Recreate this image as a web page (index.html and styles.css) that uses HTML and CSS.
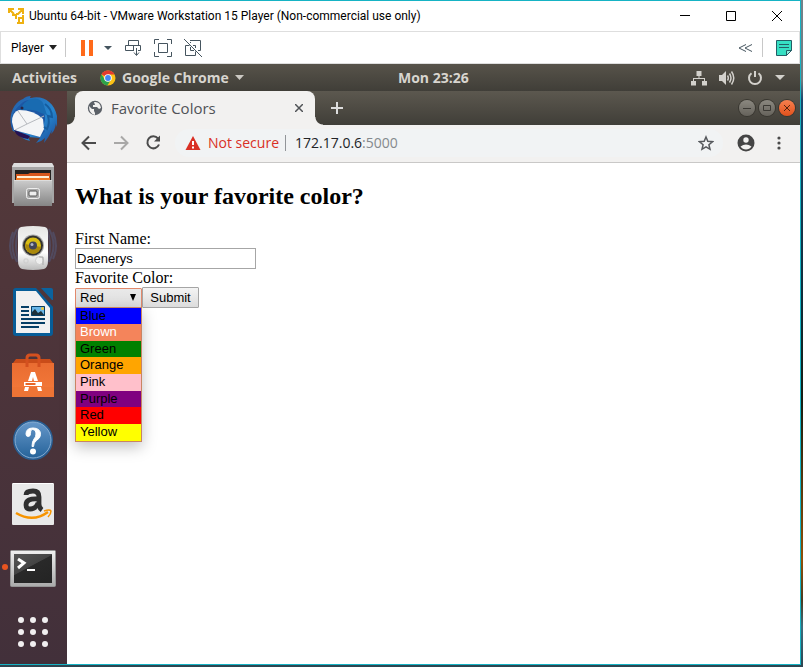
FILE: index.html
```html
<!DOCTYPE html>
<html lang="en">
<head>
<meta charset="utf-8">
<title>Favorite Colors</title>
<link rel="stylesheet" href="styles.css">
</head>
<body>
<div class="vm-window">
  <header class="titlebar">
    <svg class="vm-logo" width="16" height="16" viewBox="0 0 16 16" fill="none" stroke="#eeb111" stroke-width="2"><path d="M1 5V1h5M10 1h5v5M15 1l-5 5H8M1 1l5 5M4 7h4v4M15 15h-4v-5h4zM8 6v3M12 15H9M15 7v3"/></svg>
    <span class="vm-title">Ubuntu 64-bit - VMware Workstation 15 Player (Non-commercial use only)</span>
    <div class="caption-buttons">
      <button aria-label="Minimize"><svg width="12" height="12" viewBox="0 0 12 12" stroke="#000" fill="none"><path d="M1 5.500h10"/></svg></button>
      <button aria-label="Maximize"><svg width="12" height="12" viewBox="0 0 12 12" stroke="#000" fill="none"><path d="M1.500 1.500h9v9h-9z"/></svg></button>
      <button aria-label="Close"><svg width="12" height="12" viewBox="0 0 12 12" stroke="#000" fill="none"><path d="M1 1l10 10M11 1L1 11"/></svg></button>
    </div>
  </header>

  <div class="vm-toolbar">
    <button class="player-menu">Player <svg width="8" height="5" viewBox="0 0 8 5"><path d="M0 0h8L4 5z" fill="#222"/></svg></button>
    <span class="divider"></span>
    <button class="pause" aria-label="Suspend"><svg width="12" height="16" viewBox="0 0 12 16"><path d="M0 0h4v16H0zM8 0h4v16H8z" fill="#ff6a1a"/></svg></button>
    <button class="pause-menu" aria-label="Power options"><svg width="8" height="4" viewBox="0 0 8 4"><path d="M0 0h8L4 4z" fill="#44545f"/></svg></button>
    <div class="vm-tools">
      <button aria-label="Send Ctrl+Alt+Del"><svg width="18" height="18" viewBox="0 0 18 18" fill="none" stroke="#46555f"><path d="M4.500 6.500v-5h10v5M10 6.500H1.500v5H10M10 6.500h6.500v5H14M9.500 6.500v5M12.500 9v7M10 13.500l2.500 3 2.500-3"/></svg></button>
      <button aria-label="Full screen"><svg width="18" height="18" viewBox="0 0 18 18" fill="none" stroke="#46555f"><path d="M.5 5V.5H5M13 .5h4.500V5M17.500 13v4.500H13M5 17.500H.5V13M4.500 4.500h9v9h-9z"/></svg></button>
      <button aria-label="Unity mode"><svg width="18" height="18" viewBox="0 0 18 18" fill="none" stroke="#46555f"><path d="M0 0l18 18M6 1.500h10.500v10H14M5.500 6.500h-4v10h10v-4M6.500 3v1M6.500 8v3.500H10M9 6.500h2.500V9"/></svg></button>
    </div>
    <div class="vm-right">
      <button aria-label="Collapse toolbar"><svg width="15" height="8" viewBox="0 0 15 8" fill="none" stroke="#46555f"><path d="M8 0.500L1 4l7 3.500M14 0.500L7 4l7 3.500"/></svg></button>
      <span class="divider"></span>
      <button aria-label="Messages"><svg width="16" height="16" viewBox="0 0 16 16"><path d="M.5.500h15v10l-5 5H.5z" fill="#36dfc3" stroke="#245f66"/><path d="M10.500 15.500v-5h5z" fill="#8eeede" stroke="#245f66"/><path d="M3 4.500h10M3 7.500h10" stroke="#245f66"/></svg></button>
    </div>
  </div>

  <div class="guest">
    <div class="gnome-bar">
      <div class="gnome-left">
        <button class="activities">Activities</button>
        <button class="app-menu">
          <svg width="16" height="16" viewBox="0 0 16 16"><circle cx="8" cy="8" r="7.500" fill="#fbc116"/><path d="M8 8L1.500 4.200A7.500 7.500 0 0 1 14.600 4.500H8z" fill="#e33b2e"/><path d="M1.500 4.200A7.500 7.500 0 0 0 7.300 15.500L11 9.800 8 11.500 5 10z" fill="#2ba24c"/><circle cx="8" cy="8" r="3.800" fill="#fff"/><circle cx="8" cy="8" r="2.900" fill="#4587f3"/></svg>
          <span>Google Chrome</span>
          <svg width="9" height="5" viewBox="0 0 9 5"><path d="M0 0h9L4.500 5z" fill="#ccc9c3"/></svg>
        </button>
      </div>
      <time class="clock">Mon 23:26</time>
      <div class="tray">
        <svg width="16" height="16" viewBox="0 0 16 16" fill="#d3d1cc"><path d="M5.500 1h5v5H8.500v2H14v3h2v4.500h-5V11h2V9H3v2h2v4.500H0V11h2V8h5.500V6h-2z"/></svg>
        <svg width="16" height="16" viewBox="0 0 16 16" fill="none" stroke="#d3d1cc" stroke-width="1.500"><path d="M0 5h3l4-4v14l-4-4H0z" fill="#d3d1cc" stroke="none"/><path d="M8.500 5.500q1.600 2.500 0 5M10.500 3.500q3 4.500 0 9M12.500 1.500q4.500 6.500 0 13"/></svg>
        <svg width="16" height="16" viewBox="0 0 16 16" fill="none" stroke="#d3d1cc" stroke-width="2"><path d="M4.500 3.200a6 6 0 1 0 7 0M8 1v6"/></svg>
        <svg width="10" height="5" viewBox="0 0 10 5"><path d="M0 0h10L5 5z" fill="#d3d1cc"/></svg>
      </div>
    </div>

    <div class="desktop">
      <nav class="dock" aria-label="Dock">
        <button aria-label="Thunderbird"><svg viewBox="0 0 48 48">
          <defs><linearGradient id="tb" x2="1" y2="1"><stop stop-color="#245ca7"/><stop offset=".6" stop-color="#2786ce"/><stop offset="1" stop-color="#1b4896"/></linearGradient></defs>
          <path d="M4 35C-3 20 6 5 14 3q3-3 8-3-2 2 0 2C34-1 45 6 48 20q1 7-1 11v-4q-1 8-5 11l1-4q-3 7-8 13l1-5q-4 4-9 5l4-5L19 41l2 4q-9-2-12-8z" fill="url(#tb)"/>
          <path d="M4 35C0 26 3 15 11 9q4-5 10-5 9-2 11 8 5 7 4 12-3 9 0 11l-5 6L4 34z" fill="#1c57a4"/>
          <path d="M3 26q0-10 7-12 15 0 24 9l1 10-4 8L5 34z" fill="#f4f5f6"/>
          <path d="M9 15l9 13 17-8M18 28L6 34" fill="none" stroke="#b6b9be"/>
          <path d="M22 3q8-2 12 4l4 12q-7-2-10-4-7-2-17-1 4-9 11-11z" fill="#196bb1"/>
          <path d="M36 8q7 5 7 13l-4-1q2 7-1 13l-3-2" fill="none" stroke="#155c9e" stroke-width="2"/>
          <path d="M5 34l16 6-2 3Q8 42 5 34z" fill="#251253"/><circle cx="13" cy="12" r="1.500" fill="#2b2442"/>
        </svg></button>
        <button aria-label="Files"><svg viewBox="0 0 48 48">
          <defs><linearGradient id="fl" y2="1" x2="0"><stop stop-color="#ccc"/><stop offset="1" stop-color="#858585"/></linearGradient></defs>
          <path d="M5 3h38l2 3v37H3V6z" fill="#a6a6a6"/><path d="M5 3h38l2 4H3z" fill="#dedede"/><path d="M6 10h36v12H6z" fill="#24211f"/>
          <path d="M7 14h12l2-1h20v9H7z" fill="#d7581d"/><path d="M8 16h32v5H8z" fill="#fff0d6"/><path d="M7 18h34v5H7z" fill="#f07a25"/><path d="M5 20h38v26H5z" fill="url(#fl)"/><path d="M5 20.500h38" stroke="#ddd"/>
          <rect x="17.500" y="28.500" width="13" height="10" rx="2" fill="#aaa" stroke="#eee"/><rect x="20" y="31" width="8" height="5" rx="1" fill="#eee" stroke="#555"/>
        </svg></button>
        <button aria-label="Rhythmbox"><svg viewBox="0 0 48 48">
          <defs><linearGradient id="rb" y2="1" x2="0"><stop stop-color="#e6e6e4"/><stop offset=".6" stop-color="#fff"/><stop offset="1" stop-color="#bbb"/></linearGradient></defs>
          <g fill="none" stroke="#536695" stroke-width="2" opacity=".4"><path d="M8 5q-9 16 0 33M4 8q-6 14 0 27M11 4q-8 16 0 38M40 5q9 16 0 33M44 8q6 14 0 27M37 4q8 16 0 38"/></g>
          <path d="M12 3q12-2 24 0 3 1 3 5v28q0 8-4 9-11 2-22 0-4-1-4-9V8q0-4 3-5z" fill="url(#rb)"/>
          <circle cx="24" cy="21.500" r="11" fill="#aaa"/><circle cx="24" cy="21.500" r="10" fill="#33322f"/><circle cx="24" cy="21.500" r="8" fill="#d9bd13"/><path d="M16 20l16 3q-2 7-8 7-7-1-8-10z" fill="#aa880b"/><circle cx="24" cy="21.500" r="4" fill="#414457"/><circle cx="23" cy="20.500" r="1.500" fill="#afb5c8"/>
          <circle cx="30.500" cy="36.500" r="4" fill="#eee" stroke="#ccc"/><path d="M30 33h4v8" fill="none" stroke="#aaa"/><rect x="15" y="35" width="4" height="4" rx="1" fill="none" stroke="#ccc"/>
        </svg></button>
        <button aria-label="LibreOffice Writer"><svg viewBox="0 0 48 48">
          <path d="M4 3q0-3 3-3h20l17 19v26q0 3-3 3H7q-3 0-3-3z" fill="#075d98"/><path d="M32 0h10q2 0 2 2v10h-1z" fill="#0b639e"/>
          <path d="M7 3h20l14 17v25H7z" fill="#f1f1f1"/>
          <path d="M12 19h8M12 23h8M12 27h8M12 31h24M12 35h24M12 39h18" stroke="#063f66" stroke-width="2"/><path d="M22 18h14v10H22z" fill="#69b6e8"/><path d="M23 28v-4l3-3 3 4 3-2 4 5z" fill="#1d3039"/><circle cx="33.500" cy="20.500" r="1.500" fill="#efc839"/><path d="M22.500 18.500h13v9h-13z" fill="none" stroke="#063f66"/>
        </svg></button>
        <button aria-label="Ubuntu Software"><svg viewBox="0 0 48 48">
          <defs><linearGradient id="us" y2="1" x2="0"><stop stop-color="#e96c31"/><stop offset="1" stop-color="#f57b3b"/></linearGradient></defs>
          <path d="M7 7h34l3 4H4z" fill="#c94c19"/><path d="M3 11h42v34H3z" fill="url(#us)"/><path d="M3 35h42v10H3z" fill="#ee7435"/>
          <path d="M18 15V6q0-3 3-3h6q3 0 3 3v9" fill="none" stroke="#d4501f" stroke-width="3"/>
          <path d="M22 20h4l3 9h-4l-1-4-1 4h-4zM15 30h18v4H15zM16 35h4l-1 4h-4zM28 35h4l1 4h-4z" fill="#fff"/><path d="M16.500 32h10" stroke="#e86628" stroke-width="2"/>
        </svg></button>
        <button aria-label="Help"><svg viewBox="0 0 48 48">
          <defs><linearGradient id="hp" y2="1" x2="0"><stop stop-color="#6798ca"/><stop offset="1" stop-color="#246299"/></linearGradient></defs>
          <circle cx="24" cy="24" r="19" fill="url(#hp)" stroke="#285d91" stroke-width="2"/><circle cx="24" cy="24" r="18" fill="none" stroke="#87add2"/>
          <path d="M17 18q0-6 7-6 7.500 0 7.500 6.500 0 3.500-4 6-3 2-3 6h-1.500q0-5 2-7.500 2-2 2-5 0-4.500-3.500-4.500-2.500 0-2 4 0 3-2.300 3Q17 20.500 17 18z" fill="#fff" stroke="#fff"/><circle cx="24" cy="35.500" r="3" fill="#fff"/>
        </svg></button>
        <button aria-label="Amazon"><svg viewBox="0 0 48 48">
          <rect x="3" y="3" width="42" height="42" rx="1" fill="#e9e9e9"/><path d="M4 3.500h40" stroke="#fff"/>
          <path d="M17 15q0-4 7-4 6 0 6 6v7q0 4 3 6M29 19q-12-1-12 6 0 4 4 4 6 0 8-6" fill="none" stroke="#303030" stroke-width="4.800"/>
          <path d="M7 33q17 10 32-1" fill="none" stroke="#f79400" stroke-width="2.500"/><path d="M35 31q6-2 7 0 0 3-3 6" fill="none" stroke="#f79400" stroke-width="1.500"/>
        </svg></button>
        <button class="running" aria-label="Terminal"><svg viewBox="0 0 48 48">
          <defs><linearGradient id="tm" x2=".7" y2="1"><stop stop-color="#555"/><stop offset=".48" stop-color="#444"/><stop offset=".5" stop-color="#292929"/><stop offset="1" stop-color="#252525"/></linearGradient><linearGradient id="tf" x2="0" y2="1"><stop stop-color="#f0f0f0"/><stop offset="1" stop-color="#aaa"/></linearGradient></defs>
          <rect x="1.500" y="6.500" width="45" height="36" rx="1" fill="url(#tf)" stroke="#949494"/><path d="M5 10h38v29H5z" fill="url(#tm)"/><path d="M9 15l6 4-6 5" fill="none" stroke="#fff" stroke-width="3"/><path d="M18 26h8" stroke="#fff" stroke-width="2"/>
        </svg></button>
        <button aria-label="Show Applications"><svg viewBox="0 0 48 48" fill="#f1eff0"><circle cx="12" cy="12" r="3"/><circle cx="24" cy="12" r="3"/><circle cx="36" cy="12" r="3"/><circle cx="12" cy="24" r="3"/><circle cx="24" cy="24" r="3"/><circle cx="36" cy="24" r="3"/><circle cx="12" cy="36" r="3"/><circle cx="24" cy="36" r="3"/><circle cx="36" cy="36" r="3"/></svg></button>
      </nav>

      <section class="browser">
        <div class="tab-strip">
          <div class="tab">
            <svg width="16" height="16" viewBox="0 0 16 16"><circle cx="8" cy="8" r="7.200" fill="#5b6067"/><path d="M2 6l3 3h2v2l1 2v2Q2 14 2 6zM7 2q6-1 7 6l-2 1-2-2H6V5h2z" fill="#f2f1f0"/></svg>
            <span class="tab-title">Favorite Colors</span>
            <button class="tab-close" aria-label="Close tab"><svg width="8" height="8" viewBox="0 0 8 8" stroke="#505357" stroke-width="1.500"><path d="M0 0l8 8M8 0L0 8"/></svg></button>
          </div>
          <button class="new-tab" aria-label="New tab"><svg width="12" height="12" viewBox="0 0 12 12" stroke="#ddd" stroke-width="2"><path d="M6 0v12M0 6h12"/></svg></button>
          <div class="frame-buttons">
            <button aria-label="Minimize browser"><svg width="8" height="8" viewBox="0 0 8 8" stroke="#3b3934" fill="none"><path d="M0 4.500h8"/></svg></button>
            <button aria-label="Maximize browser"><svg width="8" height="8" viewBox="0 0 8 8" stroke="#3b3934" fill="none"><path d="M.5 1.500h7v5h-7z"/></svg></button>
            <button class="frame-close" aria-label="Close browser"><svg width="8" height="8" viewBox="0 0 8 8" stroke="#54240f" fill="none"><path d="M1 1l6 6M7 1L1 7"/></svg></button>
          </div>
        </div>

        <div class="browser-bar">
          <button aria-label="Back"><svg width="16" height="16" viewBox="0 0 16 16" fill="none" stroke="#4b4b4b" stroke-width="2"><path d="M15 8H2M8 1.500L1.500 8 8 14.500"/></svg></button>
          <button aria-label="Forward" disabled><svg width="16" height="16" viewBox="0 0 16 16" fill="none" stroke="#a9a8a7" stroke-width="2"><path d="M1 8h13M8 1.500L14.500 8 8 14.500"/></svg></button>
          <button aria-label="Reload"><svg width="16" height="16" viewBox="0 0 16 16" fill="none" stroke="#4b4b4b" stroke-width="2"><path d="M13 3.500A6 6 0 1 0 14 9.500"/><path d="M15 .5v6H9z" fill="#4b4b4b" stroke="none"/></svg></button>
          <div class="omnibox">
            <svg width="16" height="14" viewBox="0 0 16 14"><path d="M8 0l7.500 14H.5z" fill="#d93025"/><path d="M8 5v4M8 10.500v2" stroke="#fff" stroke-width="2"/></svg>
            <span class="not-secure">Not secure</span>
            <span class="url">172.17.0.6<span class="port">:5000</span></span>
            <button class="star" aria-label="Bookmark this page"><svg width="16" height="16" viewBox="0 0 16 16" fill="none" stroke="#55585c" stroke-width="1.500"><path d="M8 2l1.800 4.300 4.700.4-3.600 3.100 1.100 4.500L8 11.900l-4 2.400 1.100-4.500-3.600-3.100 4.700-.4z"/></svg></button>
          </div>
          <button class="profile" aria-label="Profile"><svg width="18" height="18" viewBox="0 0 18 18"><circle cx="9" cy="9" r="8.500" fill="#454545"/><circle cx="9" cy="6" r="2.700" fill="#f2f1f0"/><path d="M3.500 12.500q5.500-4 11 0-2 3-5.500 3t-5.500-3z" fill="#f2f1f0"/></svg></button>
          <button class="menu" aria-label="Menu"><svg width="4" height="14" viewBox="0 0 4 14" fill="#4b4b4b"><circle cx="2" cy="2" r="1.600"/><circle cx="2" cy="7" r="1.600"/><circle cx="2" cy="12" r="1.600"/></svg></button>
        </div>

        <main class="page">
          <h2>What is your favorite color?</h2>
          <form>
            <label for="first-name">First Name:</label>
            <input id="first-name" type="text" value="Daenerys">
            <label for="color">Favorite Color:</label>
            <div class="form-row">
              <div class="picker">
                <select id="color">
                  <option>Blue</option><option>Brown</option><option>Green</option><option>Orange</option><option>Pink</option><option>Purple</option><option selected>Red</option><option>Yellow</option>
                </select>
                <svg class="arrow" width="6" height="7" viewBox="0 0 6 7"><path d="M0 0h6L3 7z"/></svg>
                <ul class="options" role="listbox" aria-label="Favorite Color">
                  <li class="blue" role="option">Blue</li>
                  <li class="highlight" role="option">Brown</li>
                  <li class="green" role="option">Green</li>
                  <li class="orange" role="option">Orange</li>
                  <li class="pink" role="option">Pink</li>
                  <li class="purple" role="option">Purple</li>
                  <li class="red" role="option" aria-selected="true">Red</li>
                  <li class="yellow" role="option">Yellow</li>
                </ul>
              </div>
              <button class="submit" type="button">Submit</button>
            </div>
          </form>
        </main>
      </section>
    </div>
  </div>
</div>
</body>
</html>
```
FILE: styles.css
```css
* { box-sizing: border-box; }

body {
  margin: 0;
  padding: 0 2px 2px 0;
  min-height: 100vh;
  display: flex;
  background: linear-gradient(#74828a 0, #747b80 12%, #1d466c 15%, #102c38 45%, #171d12 60%, #8f4f08 84%, #4a3a20 90%, #3f6c7c 94%, #2d4550);
  font-family: "Open Sans", "Noto Sans", sans-serif;
}

button {
  margin: 0;
  padding: 0;
  border: 0;
  background: none;
  color: inherit;
  font: inherit;
  display: flex;
  align-items: center;
  justify-content: center;
}

svg { display: block; flex: none; }

.vm-window {
  flex: 1;
  display: flex;
  flex-direction: column;
  border: solid #16b3c4;
  border-width: 1px 1px 1px 0;
  background: #fff;
}

.titlebar {
  display: flex;
  align-items: center;
  height: 30px;
  padding-left: 8px;
  font: 12px/16px Roboto, sans-serif;
}

.vm-title { margin-left: 5px; white-space: nowrap; }

.caption-buttons { display: flex; margin-left: auto; }
.caption-buttons button { width: 46px; height: 30px; }

.vm-toolbar {
  display: flex;
  align-items: center;
  height: 33px;
  padding: 0 7px 0 10px;
  border: 1px solid #dedede;
  font: 12px/16px Roboto, sans-serif;
}

.player-menu { gap: 5px; }
.divider { width: 1px; height: 19px; background: #c8c8c8; }
.player-menu + .divider { margin-left: 8px; }
.pause { margin-left: 15px; }
.pause-menu { margin-left: 11px; }
.vm-tools { display: flex; gap: 12px; margin-left: 12px; }
.vm-right { display: flex; align-items: center; margin-left: auto; }
.vm-right .divider { margin: 0 13px 0 9px; }

.guest { flex: 1; display: flex; flex-direction: column; }

.gnome-bar {
  display: grid;
  grid-template-columns: calc(50% - 2px) auto 1fr;
  align-items: center;
  height: 27px;
  background: linear-gradient(#57534a, #403e38);
  color: #d8d5cf;
  font-size: 14px;
  font-weight: 700;
  line-height: 20px;
}

.gnome-left { display: flex; padding-left: 12px; gap: 23px; }
.app-menu { gap: 6px; }
.tray { display: flex; align-items: center; justify-content: flex-end; gap: 12px; padding-right: 15px; }

.desktop { flex: 1; display: flex; }

.dock {
  flex: none;
  width: 67px;
  padding: 5px 1px 0 0;
  display: flex;
  flex-direction: column;
  align-items: center;
  gap: 16px;
  background: linear-gradient(#553a3a, #4c343a 50%, #42303a);
}

.dock button { position: relative; width: 48px; height: 48px; }
.dock svg { width: 48px; height: 48px; }

.running::before {
  content: "";
  position: absolute;
  left: -7px;
  top: 20px;
  width: 6px;
  height: 6px;
  border-radius: 50%;
  background: #e95420;
}

.browser { flex: 1; display: flex; flex-direction: column; }

.tab-strip {
  display: flex;
  align-items: center;
  height: 34px;
  padding: 0 5px 0 8px;
  background: linear-gradient(#5c584f, #403e38);
}

.tab {
  position: relative;
  display: flex;
  align-items: center;
  width: 240px;
  height: 34px;
  padding: 0 12px;
  border-radius: 8px 8px 0 0;
  background: #f2f1f0;
  color: #505357;
  font-size: 15px;
  line-height: 20px;
}

.tab::before,
.tab::after {
  content: "";
  position: absolute;
  bottom: 0;
  width: 8px;
  height: 8px;
}
.tab::before { left: -8px; background: radial-gradient(circle at 0 0, transparent 7px, #f2f1f0 8px); }
.tab::after { right: -8px; background: radial-gradient(circle at 100% 0, transparent 7px, #f2f1f0 8px); }

.tab-title { margin-left: 8px; }
.tab-close { margin-left: auto; }
.new-tab { margin-left: 16px; }

.frame-buttons { display: flex; gap: 4px; margin-left: auto; }
.frame-buttons button {
  width: 16px;
  height: 16px;
  border-radius: 50%;
  background: linear-gradient(#8b8880, #65625b);
  box-shadow: 0 0 0 1px #393731;
}
.frame-buttons .frame-close { background: linear-gradient(#f7804f, #e2511c); }

.browser-bar {
  display: flex;
  align-items: center;
  height: 38px;
  padding: 0 19px 1px 14px;
  border-bottom: 1px solid #c9c8c7;
  background: #f2f1f0;
  gap: 16px;
}

.omnibox {
  flex: 1;
  display: flex;
  align-items: center;
  height: 28px;
  margin-left: -2px;
  padding: 0 9px 0 10px;
  border-radius: 14px;
  background: #f1f3f4;
  font-size: 14px;
  line-height: 16px;
}

.not-secure { margin-left: 7px; padding-right: 6px; border-right: 1px solid #929599; color: #d93025; }
.url { margin-left: 9px; color: #222427; }
.port { color: #85898d; }
.star { margin-left: auto; }
.profile { margin-left: -2px; }
.menu { margin-left: 6px; }

.page {
  flex: 1;
  padding: 20px 8px;
  background: #fff;
  color: #000;
  font: 16px/18px "Liberation Serif", serif;
}

.page h2 { margin: 0 0 20px; font-size: 24px; line-height: 27px; }

.page label { display: block; }

.page input {
  display: block;
  width: 181px;
  height: 21px;
  padding: 1px;
  border: 1px solid #a6a6a6;
  background: #fff;
  color: #000;
  font: 13px "Liberation Sans", sans-serif;
}

.form-row { display: flex; align-items: center; font: 13px/16px "Liberation Sans", sans-serif; }

.picker { position: relative; width: 67px; }

.picker select {
  appearance: none;
  display: block;
  width: 100%;
  height: 20px;
  padding: 0 4px;
  border: 1px solid #e2896c;
  border-radius: 1px;
  outline: 0;
  background: linear-gradient(#e9e9e9, #dedede);
  color: #000;
  font: inherit;
}

.arrow { position: absolute; right: 6px; top: 6px; pointer-events: none; }

.options {
  position: absolute;
  top: 19px;
  left: 0;
  width: 100%;
  height: 135px;
  margin: 0;
  padding: 0;
  display: grid;
  grid-template-rows: repeat(8, 1fr);
  border: 1px solid #c98463;
  box-shadow: 0 5px 14px rgba(0, 0, 0, 0.25);
  list-style: none;
}

.options li { padding-left: 4px; }
.blue { background: #00f; }
.highlight { background: #f4845b; color: #fff; }
.green { background: #008000; }
.orange { background: #ffa500; }
.pink { background: #ffc0cb; }
.purple { background: #800080; }
.red { background: #f00; }
.yellow { background: #ff0; }

.submit {
  width: 57px;
  height: 21px;
  border: 1px solid #a5a5a5;
  border-radius: 1px;
  background: linear-gradient(#f4f4f4, #dcdcdc);
}
```
